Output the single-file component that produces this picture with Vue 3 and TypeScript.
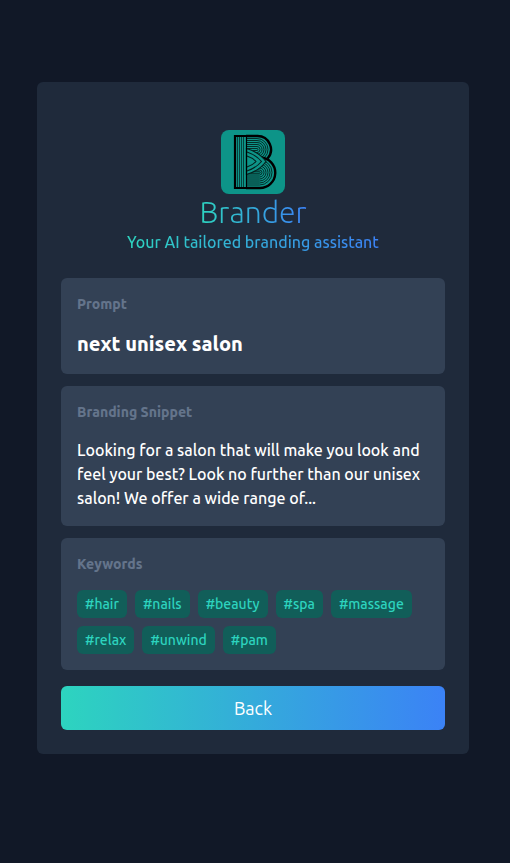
<script setup lang="ts">
import { ref } from 'vue'

const prompt = ref<string>('next unisex salon')
const snippet = ref<string>(
  'Looking for a salon that will make you look and feel your best? Look no further than our unisex salon! We offer a wide range of...'
)
const keywords = ref<string[]>(['hair', 'nails', 'beauty', 'spa', 'massage', 'relax', 'unwind', 'pam'])

// Concentric bands of the letter's two bowls, from the outside in.
const bowl = (cx: number, cy: number, r: number): string =>
  `M26 ${cy - r}H${cx}A${r} ${r} 0 0 1 ${cx} ${cy + r}H26`
const upperBands = [11, 9, 7, 5, 3, 1].map((r) => bowl(36, 19.5, r))
const lowerBands = [12.5, 10.5, 8.5, 6.5, 4.5, 2.5, 0.8].map((r) => bowl(38.5, 42.5, r))
const stemLines = [16.5, 18.5, 20.5, 22.5]
</script>

<template>
  <main class="page">
    <div class="card">
      <header class="header">
        <svg class="logo" viewBox="0 0 64 64" role="img" aria-label="Brander logo">
          <g fill="none" stroke="#04201d">
            <g stroke-width="0.9">
              <path v-for="d in upperBands" :key="d" :d="d" />
            </g>
            <path d="M25 6H36.500A13.500 13.500 0 0 1 46.500 28.500" stroke="#000" stroke-width="2.400" />
            <path d="M26 27.500H38.500A15 15 0 0 1 38.500 57.500H26Z" fill="#0d9488" stroke="none" />
            <g stroke-width="0.9">
              <path v-for="d in lowerBands" :key="d" :d="d" />
            </g>
            <path d="M39.500 27.500A15.200 15.200 0 0 1 38.500 58H25" stroke="#000" stroke-width="2.400" />
            <path d="M25.500 18.500Q38 22 45 31.500Q38 41 25.500 44.500Z" fill="#0d9488" stroke-width="1.200" />
            <path d="M26 22Q35 25 40.500 31.500Q35 38 26 41" stroke-width="1.100" />
            <path d="M26 26Q32 28 35 31.500Q32 35 26 37" stroke-width="1.100" />
            <path v-for="x in stemLines" :key="x" :d="`M${x} 7V57`" stroke-width="0.700" />
            <path d="M26 6H14V58H26" stroke="#000" stroke-width="2.200" />
            <path d="M25.500 6V58" stroke="#000" stroke-width="1.200" />
          </g>
        </svg>
        <h1 class="title gradient-text">Brander</h1>
        <p class="tagline gradient-text">Your AI tailored branding assistant</p>
      </header>

      <div class="results">
        <section class="panel">
          <h2 class="label">Prompt</h2>
          <p class="prompt">{{ prompt }}</p>
        </section>
        <section class="panel">
          <h2 class="label">Branding Snippet</h2>
          <p class="snippet">{{ snippet }}</p>
        </section>
        <section class="panel">
          <h2 class="label">Keywords</h2>
          <ul class="tags">
            <li v-for="word in keywords" :key="word" class="tag">#{{ word }}</li>
          </ul>
        </section>
      </div>

      <button type="button" class="back">Back</button>
    </div>
  </main>
</template>

<style>
body {
  margin: 0;
  background: #111827;
}
</style>

<style scoped>
.page {
  box-sizing: border-box;
  min-height: 100vh;
  display: flex;
  align-items: center;
  justify-content: center;
  padding: 24px 28px 51px 24px;
  font-family: Ubuntu, 'Noto Sans', sans-serif;
  font-size: 16px;
  font-weight: 500;
  line-height: 24px;
  color: #fff;
}

h1,
h2,
p,
ul {
  margin: 0;
  padding: 0;
}

.card {
  box-sizing: border-box;
  width: 100%;
  max-width: 432px;
  padding: 24px;
  border-radius: 6px;
  background: #1f2a3b;
}

.header {
  display: flex;
  flex-direction: column;
  align-items: center;
  padding: 24px 0;
  text-align: center;
}

.logo {
  width: 64px;
  height: 64px;
  border-radius: 8px;
  background: #0d9488;
}

.gradient-text {
  background: linear-gradient(to right, #2dd4bf, #3b82f6);
  -webkit-background-clip: text;
  background-clip: text;
  color: transparent;
}

.title {
  font-size: 30px;
  line-height: 36px;
  font-weight: 300;
}

.results {
  display: flex;
  flex-direction: column;
  gap: 12px;
}

.panel {
  display: flex;
  flex-direction: column;
  gap: 16px;
  padding: 16px;
  border-radius: 6px;
  background: #334155;
}

.label {
  font-size: 14px;
  line-height: 20px;
  font-weight: 800;
  color: #64748b;
}

.prompt {
  font-size: 20px;
  line-height: 28px;
  font-weight: 800;
}

.tags {
  display: flex;
  flex-wrap: wrap;
  gap: 8px;
  list-style: none;
}

.tag {
  padding: 4px 8px;
  border-radius: 6px;
  background: #115e59;
  color: #2dd4bf;
  font-size: 14px;
  line-height: 20px;
}

.back {
  display: block;
  width: 100%;
  margin-top: 16px;
  padding: 8px;
  border: 0;
  border-radius: 6px;
  background: linear-gradient(to right, #2dd4bf, #3b82f6);
  color: #fff;
  font-family: inherit;
  font-size: 18px;
  line-height: 28px;
  cursor: pointer;
}
</style>
